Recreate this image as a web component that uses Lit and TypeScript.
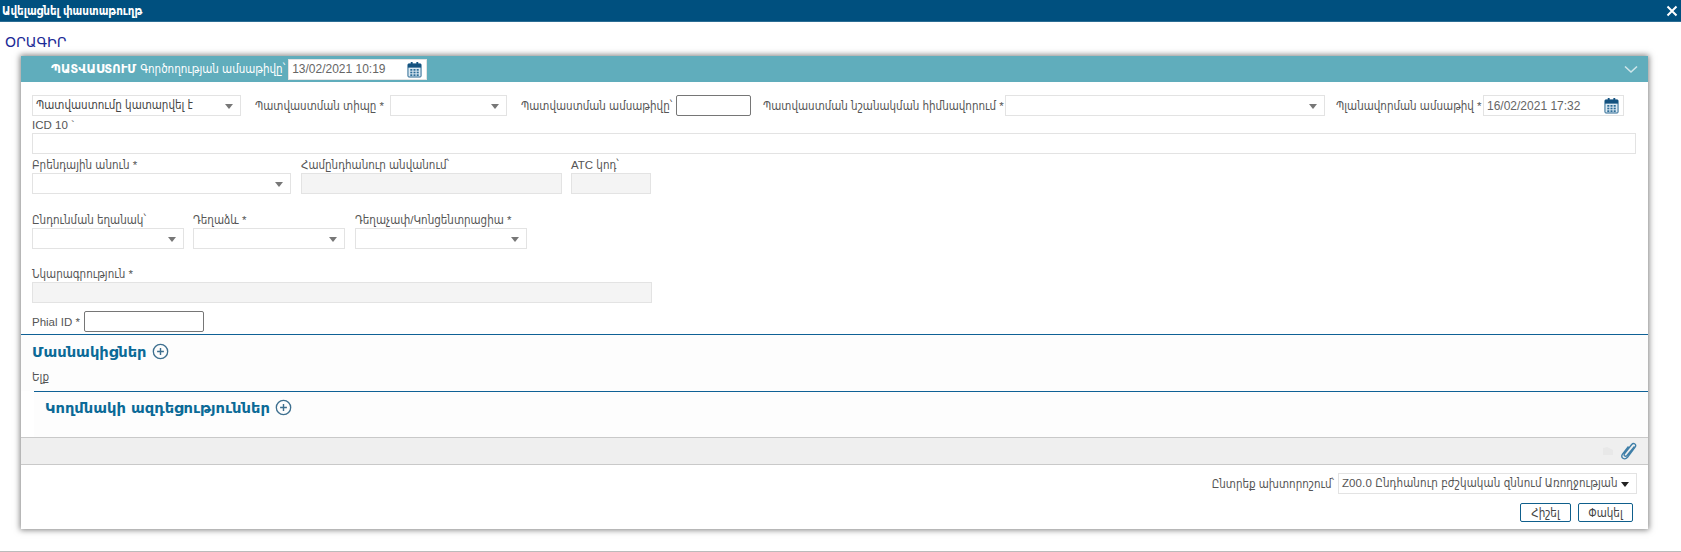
import { LitElement, html, css, svg } from "lit";
import { customElement } from "lit/decorators.js";

const calendar = html`<svg class="cal" viewBox="0 0 16 18" width="15" height="17">
  <rect x="1" y="3" width="14" height="14" rx="1" fill="#dceaf3" stroke="#1f5f8b"/>
  <rect x="1" y="3" width="14" height="4" fill="#14527f"/>
  <rect x="4" y="1" width="2" height="4" fill="#14527f"/><rect x="10" y="1" width="2" height="4" fill="#14527f"/>
  ${[0, 1, 2].map((r) => [0, 1, 2].map((c) => svg`<rect x="${3.5 + c * 3.4}" y="${8.5 + r * 2.8}" width="2.2" height="1.8" fill="#2a6a96"/>`))}
</svg>`;

const plus = html`<svg class="plus" viewBox="0 0 18 18" width="17" height="17">
  <circle cx="9" cy="9" r="7.6" fill="none" stroke="#3d6f8f" stroke-width="1.4"/>
  <path d="M9 5.4v7.2M5.4 9h7.2" stroke="#3d6f8f" stroke-width="1.5"/>
</svg>`;

@customElement("app-root")
export class AppRoot extends LitElement {
  static styles = css`
    :host { display: block; width: 1681px; height: 552px; overflow: hidden; background: #fff; position: relative;
      font-family: "Liberation Sans", "DejaVu Sans Condensed", "DejaVu Sans", sans-serif; font-size: 11.5px; color: #555; }
    * { box-sizing: border-box; }
    .titlebar { height: 22px; background: #00507f; color: #fff; font-weight: bold; font-size: 11.5px; display: flex;
      align-items: center; justify-content: space-between; padding: 0 2px; border-bottom: 1px solid #2b6d94; }
    .close { width: 12px; height: 12px; margin-right: 1px; }
    .heading { height: 34px; padding: 10px 0 0 5px; color: #1b2a96; font-size: 14px; line-height: 20px; font-family: "DejaVu Sans", sans-serif; }
    .panel { margin-left: 21px; width: 1627px; height: 473px; box-shadow: 0 0 6px 1px rgba(0,0,0,.5); display: flex; flex-direction: column; background: #fff; }
    .panel-head { height: 26px; flex: none; background: #60adbc; color: #fff; display: flex; align-items: center; padding-left: 30px; font-size: 11.5px; }
    .panel-head b { font-weight: bold; margin-right: 4px; font-size: 11.5px; font-family: "DejaVu Sans", sans-serif; }
    .chev { margin-left: auto; margin-right: 10px; }
    .head-date { margin-left: 3px; width: 139px; height: 22px; border: 0; }
    .form { flex: none; height: 252px; padding: 13px 0 0 11px; position: relative; }
    .row { display: flex; align-items: flex-end; }
    .r1 { height: 21px; align-items: center; }
    .f { display: block; height: 21px; background: #fff; border: 1px solid #e3e3e3; position: relative; line-height: 19px; padding-left: 3px; color: #444; white-space: nowrap; overflow: hidden; flex: none; }
    .f.sel::after { content: ""; position: absolute; right: 7px; top: 8px; border: 4px solid transparent; border-top: 5px solid #777; border-bottom: 0; }
    .f.dis { background: #f4f4f4; }
    .f.dark { border: 1px solid #767676; border-radius: 2px; }
    .date { display: flex; align-items: center; justify-content: space-between; font-size: 12px; color: #666; padding: 0 4px 0 3px; line-height: 1; }
    .lbl { flex: none; white-space: nowrap; color: #555; }
    .col { flex: none; }
    .col .lbl { display: block; height: 15px; line-height: 15px; }
    .stack { display: flex; gap: 9px; margin-top: 0; }
    .s-icd { margin-top: 2px; }
    .s-brand { margin-top: 4px; }
    .s-route { margin-top: 19px; }
    .s-desc { margin-top: 18px; }
    .s-phial { margin-top: 8px; display: flex; align-items: center; gap: 4px; }
    .section { flex: none; height: 57px; border-top: 1px solid #0f6196; background: #fdfdfd; }
    .sec-title { display: flex; align-items: center; gap: 5px; font-size: 14.7px; font-weight: bold; color: #0b6a97; padding: 5px 0 0 11px; height: 28px; font-family: "DejaVu Sans", sans-serif; }
    .exit { padding: 8px 0 0 11px; color: #555; height: 25px; line-height: 12px; }
    .sub { flex: none; margin-left: 13px; border-top: 1px solid #0f6196; height: 46px; background: #fdfdfd; }
    .sub .sec-title { padding: 3px 0 0 11px; }
    .band { flex: none; height: 28px; background: #efefef; border-top: 1px solid #c9c9c9; border-bottom: 1px solid #c9c9c9; display: flex; justify-content: flex-end; align-items: center; gap: 6px; padding-right: 10px; }
    .foot { flex: 1; display: flex; flex-direction: column; align-items: flex-end; padding: 8px 11px 0 0; gap: 9px; }
    .diag { display: flex; align-items: center; gap: 4px; }
    .f.diagsel { width: 299px; padding-right: 22px; letter-spacing: .1px; color: #555; }
    .f.diagsel::after { content: ""; position: absolute; right: 7px; top: 8px; border: 4px solid transparent; border-top: 5px solid #222; border-bottom: 0; }
    .btns { display: flex; gap: 7px; padding-right: 4px; }
    .btn { width: 51px; height: 19px; border: 1px solid #0f5f8c; border-radius: 2px; background: #fff; display: flex; align-items: center; justify-content: center; color: #444; }
    .btn.wide { width: 55px; }
    .pageline { position: absolute; left: 0; right: 0; bottom: 0; height: 1px; background: #bbb; }
  `;

  render() {
    return html`
      <div class="titlebar"><span>Ավելացնել փաստաթուղթ</span>
        <svg class="close" viewBox="0 0 12 12"><path d="M1.5 1.5l9 9M10.5 1.5l-9 9" stroke="#fff" stroke-width="2"/></svg></div>
      <div class="heading">ՕՐԱԳԻՐ</div>
      <div class="panel">
        <div class="panel-head"><b>ՊԱՏՎԱՍՏՈՒՄ</b><span>Գործողության ամսաթիվը՝</span>
          <div class="f date head-date">13/02/2021 10:19 ${calendar}</div>
          <svg class="chev" width="14" height="9" viewBox="0 0 14 9"><path d="M1 1.500l6 5.500 6-5.500" fill="none" stroke="#cfe6ea" stroke-width="1.600"/></svg>
        </div>
        <div class="form">
          <div class="row r1">
            <div class="f sel" style="width:209px">Պատվաստումը կատարվել է</div>
            <span class="lbl" style="margin-left:14px;width:135px">Պատվաստման տիպը *</span>
            <div class="f sel" style="width:117px"></div>
            <span class="lbl" style="margin-left:14px;width:155px">Պատվաստման ամսաթիվը՝</span>
            <div class="f dark" style="width:75px"></div>
            <span class="lbl" style="margin-left:12px;width:242px">Պատվաստման նշանակման հիմնավորում *</span>
            <div class="f sel" style="width:320px"></div>
            <span class="lbl" style="margin-left:11px;width:147px">Պլանավորման ամսաթիվ *</span>
            <div class="f date" style="width:141px">16/02/2021 17:32 ${calendar}</div>
          </div>
          <div class="col s-icd"><span class="lbl">ICD 10 \`</span><div class="f" style="width:1604px"></div></div>
          <div class="stack s-brand">
            <div class="col"><span class="lbl">Բրենդային անուն *</span><div class="f sel" style="width:259px"></div></div>
            <div class="col" style="margin-left:1px"><span class="lbl">Համընդհանուր անվանում՝</span><div class="f dis" style="width:261px"></div></div>
            <div class="col"><span class="lbl">ATC կոդ՝</span><div class="f dis" style="width:80px"></div></div>
          </div>
          <div class="stack s-route">
            <div class="col"><span class="lbl">Ընդունման եղանակ՝</span><div class="f sel" style="width:152px"></div></div>
            <div class="col"><span class="lbl">Դեղաձև *</span><div class="f sel" style="width:152px"></div></div>
            <div class="col" style="margin-left:1px"><span class="lbl">Դեղաչափ/Կոնցենտրացիա *</span><div class="f sel" style="width:172px"></div></div>
          </div>
          <div class="col s-desc"><span class="lbl">Նկարագրություն *</span><div class="f dis" style="width:620px"></div></div>
          <div class="s-phial"><span class="lbl">Phial ID *</span><div class="f dark" style="width:120px"></div></div>
        </div>
        <div class="section">
          <div class="sec-title">Մասնակիցներ ${plus}</div>
          <div class="exit">Ելք</div>
        </div>
        <div class="sub"><div class="sec-title">Կողմնակի ազդեցություններ ${plus}</div></div>
        <div class="band">
          <svg width="12" height="10" viewBox="0 0 12 10"><path d="M1 9V2l4-1 6 3v5z" fill="#e8e8e8"/></svg>
          <svg width="18" height="20" viewBox="0 0 18 20"><path d="M14.500 5.500L7 14.500c-1.500 1.700-3.800.2-2.600-1.700L11.500 3.700c2.200-2.500 5.600-.2 3.600 2.500L7.500 16.300c-3 3.400-7.500.3-5-3.200L8.500 5.500" fill="none" stroke="#3f7fa8" stroke-width="1.400"/></svg>
        </div>
        <div class="foot">
          <div class="diag"><span class="lbl">Ընտրեք ախտորոշում՝</span>
            <div class="f diagsel">Z00.0 Ընդհանուր բժշկական զննում Առողջության</div>
          </div>
          <div class="btns"><div class="btn">Հիշել</div><div class="btn wide">Փակել</div></div>
        </div>
      </div>
      <div class="pageline"></div>
    `;
  }
}
